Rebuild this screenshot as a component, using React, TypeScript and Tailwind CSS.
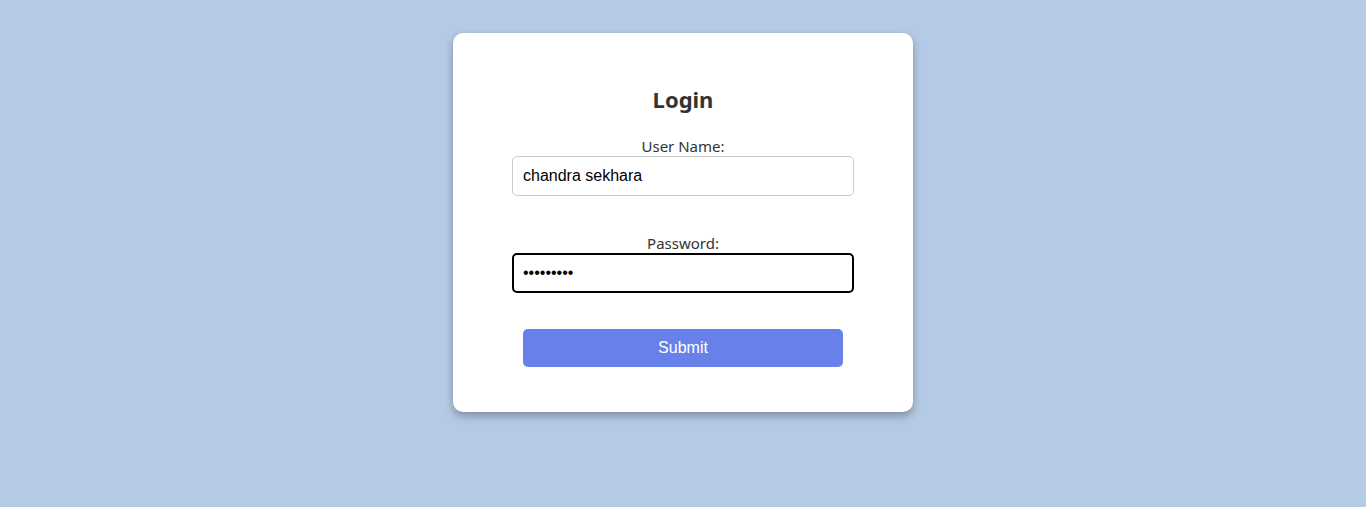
export default function App() {
  return (
    <div className="min-h-[507px] w-full bg-[#b5cae5] pt-[33px] font-['Noto_Sans',sans-serif]">
      <div className="mx-auto flex w-[460px] flex-col items-center rounded-[10px] bg-white pt-[52px] pb-[45px] shadow-[0_4px_8px_rgba(0,0,0,0.3)]">
        <h2 className="text-[22px] leading-[28px] font-bold text-[#333]">Login</h2>

        <label className="mt-[24px] text-[15px] leading-[19px] text-[#333]">User Name:</label>
        <input
          type="text"
          defaultValue="chandra sekhara"
          className="h-[40px] w-[342px] rounded-[5px] border border-[#ccc] px-[10px] font-['Liberation_Sans',sans-serif] text-[16px] text-black outline-none"
        />

        <label className="mt-[38px] text-[15px] leading-[19px] text-[#333]">Password:</label>
        <input
          type="password"
          defaultValue="123456789"
          className="h-[40px] w-[342px] rounded-[5px] border-2 border-black px-[9px] font-['Liberation_Sans',sans-serif] text-[16px] text-black outline-none"
        />

        <button className="mt-[36px] h-[38px] w-[320px] rounded-[5px] bg-[#6880ea] font-['Liberation_Sans',sans-serif] text-[16px] text-white">
          Submit
        </button>
      </div>
    </div>
  );
}
